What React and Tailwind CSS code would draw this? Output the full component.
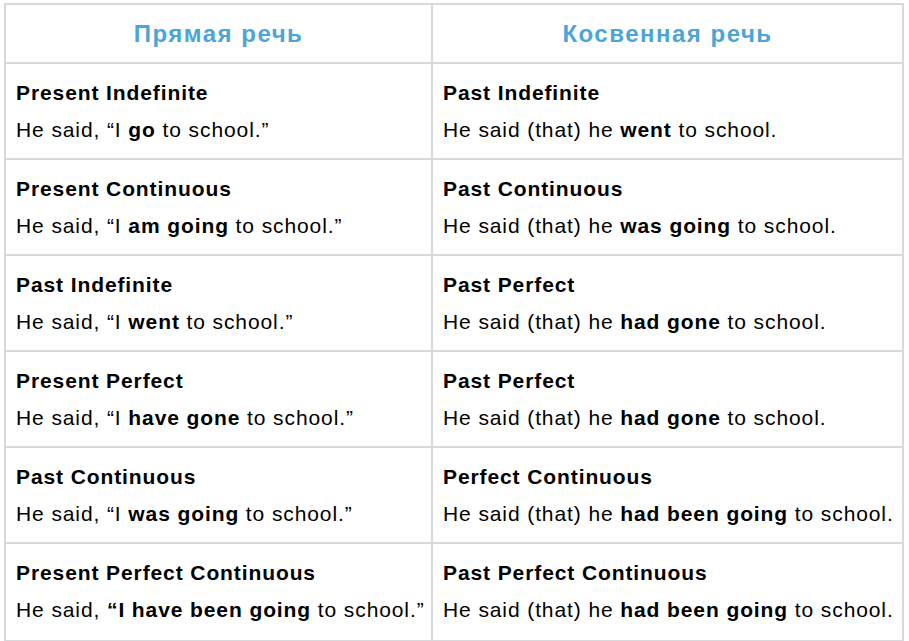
import React from "react";

const rows = [
  {
    l: "Present Indefinite",
    lt: ["He said, “I ", "go", " to school.”"],
    r: "Past Indefinite",
    rt: ["He said (that) he ", "went", " to school."],
  },
  {
    l: "Present Continuous",
    lt: ["He said, “I ", "am going", " to school.”"],
    r: "Past Continuous",
    rt: ["He said (that) he ", "was going", " to school."],
  },
  {
    l: "Past Indefinite",
    lt: ["He said, “I ", "went", " to school.”"],
    r: "Past Perfect",
    rt: ["He said (that) he ", "had gone", " to school."],
  },
  {
    l: "Present Perfect",
    lt: ["He said, “I ", "have gone", " to school.”"],
    r: "Past Perfect",
    rt: ["He said (that) he ", "had gone", " to school."],
  },
  {
    l: "Past Continuous",
    lt: ["He said, “I ", "was going", " to school.”"],
    r: "Perfect Continuous",
    rt: ["He said (that) he ", "had been going", " to school."],
  },
  {
    l: "Present Perfect Continuous",
    lt: ["He said, ", "“I have been going", " to school.”"],
    r: "Past Perfect Continuous",
    rt: ["He said (that) he ", "had been going", " to school."],
  },
];

function Cell({ title, parts, left, last }) {
  return (
    <div
      className={
        "h-[96px] pt-[10px] tracking-[0.9px] " +
        (left ? "pl-[10px] border-r-2 border-[#d6dadc] " : "pl-[10px] ") +
        (last ? "" : "border-b-2 border-b-[#d6dadc]")
      }
    >
      <div className="font-bold text-[21px] leading-[37px] text-black whitespace-nowrap">{title}</div>
      <div className="text-[21px] leading-[37px] text-black whitespace-nowrap">
        {parts[0]}
        <b>{parts[1]}</b>
        {parts[2]}
      </div>
    </div>
  );
}

export default function App() {
  return (
    <div className="w-[909px] h-[641px] bg-white pt-[3px] pl-[4px]" style={{ fontFamily: '"Liberation Sans", Arial, sans-serif' }}>
      <div className="w-[900px] border-2 border-[#d6dadc] grid grid-cols-[427px_1fr]">
        <div className="h-[59px] border-r-2 border-b-2 border-[#d6dadc] flex items-center justify-center text-[24px] tracking-[1.5px] font-bold text-[#4ca5d6]">
          Прямая речь
        </div>
        <div className="h-[59px] border-b-2 border-[#d6dadc] flex items-center justify-center text-[24px] tracking-[1.5px] font-bold text-[#4ca5d6]">
          Косвенная речь
        </div>
        {rows.map((r, i) => (
          <React.Fragment key={i}>
            <Cell title={r.l} parts={r.lt} left last={i === rows.length - 1} />
            <Cell title={r.r} parts={r.rt} last={i === rows.length - 1} />
          </React.Fragment>
        ))}
      </div>
    </div>
  );
}
